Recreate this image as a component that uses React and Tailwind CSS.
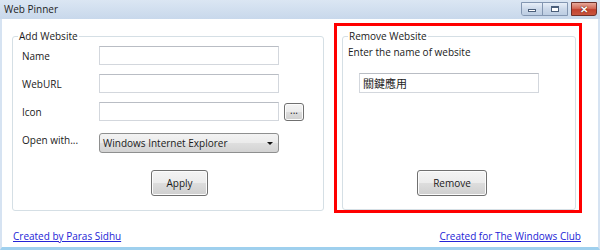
import React from "react";

const btn =
  "border border-[#707070] rounded-[3px] bg-[linear-gradient(#f4f4f4_0%,#ececec_48%,#dddddd_52%,#cfcfcf_100%)] shadow-[inset_0_0_0_1px_#fcfcfc] text-[10px] text-[#1a1a1a] flex items-center justify-center leading-none";

const input =
  "h-[19px] w-[180px] bg-white border border-[#d3d7dd] border-t-[#b9bdc4]";

export default function App() {
  return (
    <div className="w-[600px] h-[250px] flex flex-col font-['Open_Sans','Noto_Sans_CJK_TC',sans-serif] text-[#1a1a1a] bg-[#cfdcec]">
      {/* Title bar */}
      <div className="h-[19px] flex items-start bg-[linear-gradient(#dbe6f3,#c8d8eb)]">
        <div className="pl-[4px] pt-[3px] text-[10px] leading-[13px] text-[#1e1e1e]">Web Pinner</div>
        <div className="ml-auto mr-[3px] mt-[2px] flex items-start">
          <div className="flex h-[14px] border border-[#8396b1] rounded-bl-[3px] overflow-hidden">
            <div className="w-[21px] h-full flex items-center justify-center bg-[linear-gradient(#e8eff8,#cbd8e9_50%,#bccde2)] border-r border-[#8396b1]">
              <div className="w-[8px] h-[3px] bg-white border border-[#4b5f7a] mt-[3px]" />
            </div>
            <div className="w-[24px] h-full flex items-center justify-center bg-[linear-gradient(#e8eff8,#cbd8e9_50%,#bccde2)]">
              <div className="w-[8px] h-[6px] border border-[#4b5f7a] border-t-2 bg-white" />
            </div>
          </div>
          <div className="ml-[3px] w-[26px] h-[14px] border border-[#6e3029] rounded-br-[3px] bg-[linear-gradient(#e7a899,#d46a57_45%,#c2412e_55%,#c9563f)] flex items-center justify-center">
            <span className="text-white text-[10px] font-bold leading-none [text-shadow:0_0_1px_#5a1a12,0_0_1px_#5a1a12]">✕</span>
          </div>
        </div>
      </div>

      {/* Body */}
      <div className="flex-1 flex flex-col bg-white border-x-2 border-[#d6e3f2] border-b-[3px] border-b-[#9fd0ee]">
        <div className="flex items-start pl-[10px]">
          {/* Add Website */}
          <fieldset className="mt-[10px] w-[312px] h-[182px] border border-[#d5dfe5] rounded-[3px] pl-[5px] pt-[3px]">
            <legend className="px-[1px] text-[10px] leading-[14px]">Add Website</legend>
            <div className="flex flex-col">
              <div className="flex items-center h-[19px]">
                <span className="w-[81px] pl-[4px] text-[10px] leading-[14px]">Name</span>
                <div className={input} />
              </div>
              <div className="flex items-center h-[19px] mt-[9px]">
                <span className="w-[81px] pl-[4px] text-[10px] leading-[14px]">WebURL</span>
                <div className={input} />
              </div>
              <div className="flex items-center h-[19px] mt-[9px]">
                <span className="w-[81px] pl-[4px] text-[10px] leading-[14px]">Icon</span>
                <div className={input} />
                <div className={btn + " ml-[5px] w-[20px] h-[18px] pb-[4px]"}>...</div>
              </div>
              <div className="flex items-start h-[20px] mt-[12px]">
                <span className="w-[81px] pl-[4px] text-[10px] leading-[14px]">Open with...</span>
                <div className="h-[20px] w-[180px] border border-[#8e8f8f] rounded-[3px] bg-[linear-gradient(#f3f3f3_0%,#ebebeb_48%,#dedede_52%,#d3d3d3_100%)] flex items-center pl-[3px] pr-[5px]">
                  <span className="text-[10px] leading-[14px]">Windows Internet Explorer</span>
                  <span className="ml-auto w-0 h-0 border-x-[3px] border-x-transparent border-t-[3px] border-t-[#111]" />
                </div>
              </div>
              <div className={btn + " mt-[17px] ml-[133px] w-[57px] h-[26px]"}>Apply</div>
            </div>
          </fieldset>

          {/* Remove Website */}
          <div className="ml-[10px] mt-[4px] w-[248px] h-[190px] border-[3px] border-[#ff0000] pl-[5px] pr-[4px] pt-[3px]">
            <fieldset className="w-[234px] h-[181px] border border-[#d5dfe5] rounded-[3px] pl-[5px] pt-[2px]">
              <legend className="px-[1px] text-[10px] leading-[14px]">Remove Website</legend>
              <div className="flex flex-col">
                <span className="text-[10px] leading-[14px]">Enter the name of website</span>
                <div className="mt-[14px] ml-[11px] h-[20px] w-[180px] bg-white border border-[#d3d7dd] border-t-[#b9bdc4] flex items-center pl-[3px]">
                  <span className="text-[11px] leading-[14px] font-['Noto_Sans_CJK_TC',sans-serif] text-[#222]">關鍵應用</span>
                </div>
                <div className={btn + " mt-[77px] ml-[69px] w-[70px] h-[26px]"}>Remove</div>
              </div>
            </fieldset>
          </div>
        </div>

        {/* Links */}
        <div className="mt-[16px] flex justify-between pl-[11px] pr-[17px]">
          <span className="text-[10px] leading-[14px] text-[#2424d6] underline">Created by Paras Sidhu</span>
          <span className="text-[10px] leading-[14px] text-[#2424d6] underline">Created for The Windows Club</span>
        </div>
      </div>
    </div>
  );
}
